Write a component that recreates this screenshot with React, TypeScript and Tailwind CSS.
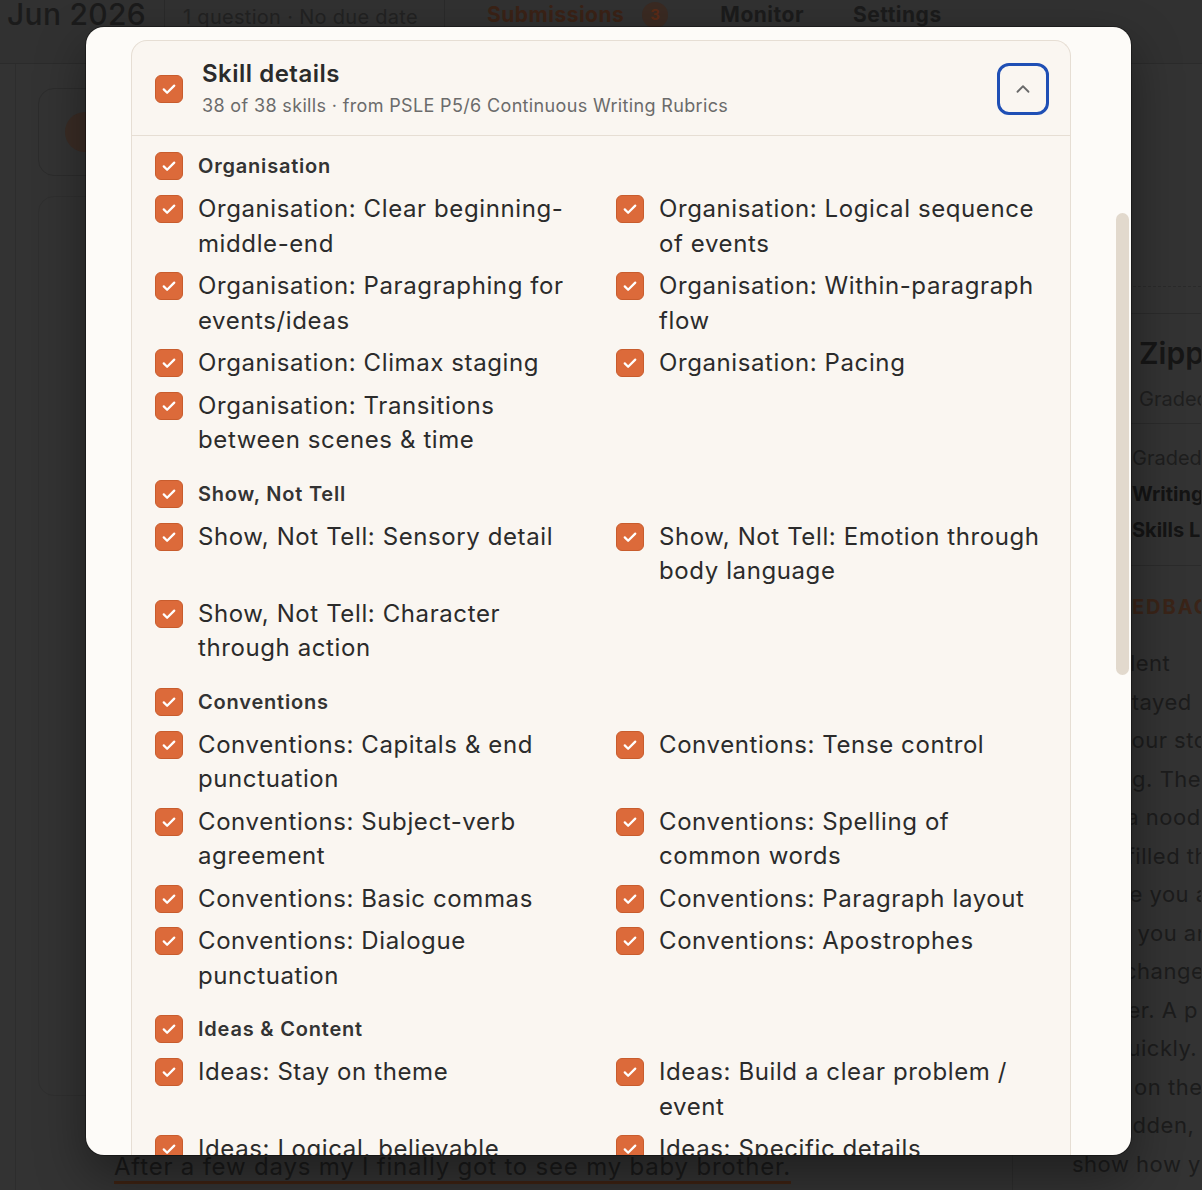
import { ChevronUp } from "lucide-react";

type Group = { name: string; items: string[] };

const groups: Group[] = [
  {
    name: "Organisation",
    items: [
      "Organisation: Clear beginning-middle-end",
      "Organisation: Logical sequence of events",
      "Organisation: Paragraphing for events/ideas",
      "Organisation: Within-paragraph flow",
      "Organisation: Climax staging",
      "Organisation: Pacing",
      "Organisation: Transitions between scenes & time",
    ],
  },
  {
    name: "Show, Not Tell",
    items: [
      "Show, Not Tell: Sensory detail",
      "Show, Not Tell: Emotion through body language",
      "Show, Not Tell: Character through action",
    ],
  },
  {
    name: "Conventions",
    items: [
      "Conventions: Capitals & end punctuation",
      "Conventions: Tense control",
      "Conventions: Subject-verb agreement",
      "Conventions: Spelling of common words",
      "Conventions: Basic commas",
      "Conventions: Paragraph layout",
      "Conventions: Dialogue punctuation",
      "Conventions: Apostrophes",
    ],
  },
  {
    name: "Ideas & Content",
    items: [
      "Ideas: Stay on theme",
      "Ideas: Build a clear problem / event",
      "Ideas: Logical, believable sequence",
      "Ideas: Specific details",
      "Ideas: Meaningful ending",
      "Ideas: Purposeful title",
    ],
  },
];

// backdrop text behind the modal, only the tail of each line shows
const feedbackLines = [
  "Excellent",
  "You stayed",
  "and your story",
  "ending. The",
  "than a noodle",
  "then filled the",
  "Where you are",
  "when you are",
  "how change",
  "Sooner. A p",
  "too quickly.",
  "Later on the",
  "So sudden,",
  "show how y",
];

function Check() {
  return (
    <span className="flex h-[28px] w-[28px] shrink-0 items-center justify-center rounded-[6px] border border-[#c85c2d] bg-[#dc6a3a]">
      <svg width="18" height="18" viewBox="0 0 24 24" fill="none">
        <path d="M5 12.5l4.5 4.5L19 7.5" stroke="#fff" strokeWidth="3" strokeLinecap="round" strokeLinejoin="round" />
      </svg>
    </span>
  );
}

function Backdrop() {
  return (
    <div className="flex h-full flex-col">
      <div className="flex h-[64px] shrink-0 items-start border-b border-[#2b2b2b] bg-[#313131]">
        <div className="-mt-[8px] pl-[7px] pr-[18px] text-[30px] font-medium tracking-[0.3px] text-[#1b1b1b]">Jun 2026</div>
        <div className="h-[28px] w-px bg-[#2a2a2a]" />
        <div className="pl-[18px] pr-[26px] text-[20px] leading-[34px] tracking-[0.3px] text-[#222]">1 question · No due date</div>
        <div className="h-[28px] w-px bg-[#2a2a2a]" />
        <div className="flex items-center pl-[42px] text-[21px] font-bold leading-[30px] tracking-[0.5px] text-[#1b1b1b]">
          <span className="text-[#3a2216]">Submissions</span>
          <span className="ml-[18px] flex h-[26px] w-[26px] items-center justify-center rounded-full bg-[#3a2a22] text-[15px] text-[#5a2a16]">3</span>
          <span className="ml-[52px]">Monitor</span>
          <span className="ml-[49px]">Settings</span>
        </div>
      </div>
      <div className="flex flex-1">
        <div className="w-[16px] border-r border-[#2d2d2d]" />
        <div className="flex w-[996px] flex-col">
          <div className="ml-[22px] mt-[24px] flex h-[88px] w-[300px] items-center rounded-[16px] border border-[#2c2c2c] pl-[26px]">
            <span className="h-[40px] w-[40px] rounded-full bg-[#3a2c25]" />
          </div>
          <div className="ml-[22px] mt-[20px] h-[900px] w-[300px] rounded-[16px] border border-[#2f2f2f]" />
          <div className="ml-[98px] mt-auto pb-[8px]">
            <span className="border-b-[3px] border-[#3d2212] text-[24px] leading-[30px] tracking-[0.8px] text-[#1a1a1a]">
              After a few days my I finally got to see my baby brother.
            </span>
          </div>
        </div>
        <div className="flex w-[189px] flex-col overflow-hidden border-l border-[#2d2d2d]">
          <div className="mt-[222px] border-t border-dashed border-[#2a2a2a]" />
          <div className="mt-[26px] border-t border-[#2b2b2b]" />
          <div className="ml-[126px] mt-[21px] whitespace-nowrap text-[30px] font-semibold leading-[36px] text-[#161616]">Zippy</div>
          <div className="ml-[126px] mt-[14px] whitespace-nowrap text-[20px] leading-[28px] text-[#1f1f1f]">Graded</div>
          <div className="mt-[10px] border-t border-[#2b2b2b]" />
          <div className="ml-[119px] mt-[16px] whitespace-nowrap text-[20px] leading-[36px] text-[#1e1e1e]">Graded</div>
          <div className="ml-[119px] whitespace-nowrap text-[20px] font-bold leading-[36px] text-[#141414]">Writing</div>
          <div className="ml-[119px] whitespace-nowrap text-[20px] font-bold leading-[36px] text-[#141414]">Skills L</div>
          <div className="mt-[17px] border-t border-[#2b2b2b]" />
          <div className="ml-[91px] mt-[27px] whitespace-nowrap text-[20px] font-bold leading-[28px] tracking-[2px] text-[#3a2418]">FEEDBACK</div>
          <div className="mt-[23px] flex flex-col pl-[59px]">
            {feedbackLines.map((l) => (
              <div key={l} className="whitespace-nowrap text-[22px] leading-[38.5px] tracking-[0.5px] text-[#1c1c1c]">
                {l}
              </div>
            ))}
          </div>
        </div>
      </div>
    </div>
  );
}

function SkillModal() {
  return (
    <div className="absolute left-[86px] top-[27px] h-[1128px] w-[1045px] overflow-hidden rounded-[18px] bg-[#fdfbf8] shadow-[0_0_0_1px_rgba(0,0,0,0.35),0_20px_50px_rgba(0,0,0,0.4)]">
      <div className="pl-[45px] pr-[60px] pt-[13px]">
        <div className="rounded-t-[16px] border border-b-0 border-[#e6ded4] bg-[#faf6f1]">
          <div className="flex items-center border-b border-[#e6ded4] pb-[14px] pl-[23px] pr-[21px] pt-[16px]">
            <Check />
            <div className="ml-[19px] flex-1">
              <div className="text-[24px] font-semibold leading-[34px] tracking-[0.5px] text-[#2b2b2b]">Skill details</div>
              <div className="text-[18px] leading-[30px] tracking-[0.35px] text-[#6b6b6b]">
                38 of 38 skills · from PSLE P5/6 Continuous Writing Rubrics
              </div>
            </div>
            <button className="flex h-[52px] w-[52px] items-center justify-center rounded-[12px] border-[3px] border-[#1f4fb5]">
              <ChevronUp size={22} strokeWidth={2} color="#6a6a6a" />
            </button>
          </div>
          <div className="flex flex-col gap-[18px] px-[23px] pt-[12px]">
            {groups.map((g) => (
              <div key={g.name} className="flex flex-col gap-[8px]">
                <div className="flex h-[36px] items-center gap-[15px]">
                  <Check />
                  <span className="text-[20px] font-semibold tracking-[0.8px] text-[#333]">{g.name}</span>
                </div>
                <div className="grid grid-cols-2 gap-x-[30px] gap-y-[8px]">
                  {g.items.map((it) => (
                    <div key={it} className="flex items-start gap-[15px]">
                      <span className="mt-[3px]">
                        <Check />
                      </span>
                      <span className="text-[24px] leading-[34.5px] tracking-[0.6px] text-[#2b2b2b]">{it}</span>
                    </div>
                  ))}
                </div>
              </div>
            ))}
          </div>
        </div>
      </div>
      <div className="absolute right-[2px] top-[186px] h-[462px] w-[13px] rounded-full bg-[#e2d9cd]" />
    </div>
  );
}

export default function App() {
  return (
    <div className="relative h-[1190px] w-[1202px] overflow-hidden bg-[#333333] font-['Inter',sans-serif]">
      <Backdrop />
      <SkillModal />
    </div>
  );
}
